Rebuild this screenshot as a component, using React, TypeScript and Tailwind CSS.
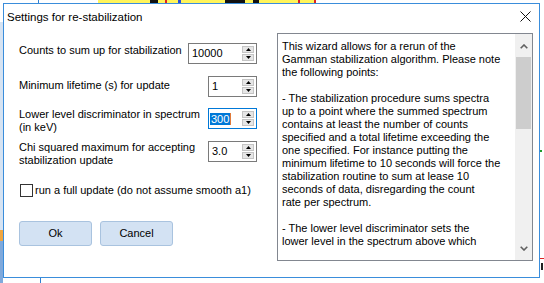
import React from 'react';

const helpLines = [
  'This wizard allows for a rerun of the',
  'Gamman stabilization algorithm. Please note',
  'the following points:',
  '',
  '- The stabilization procedure sums spectra',
  'up to a point where the summed spectrum',
  'contains at least the number of counts',
  'specified and a total lifetime exceeding the',
  'one specified. For instance putting the',
  'minimum lifetime to 10 seconds will force the',
  'stabilization routine to sum at lease 10',
  'seconds of data, disregarding the count',
  'rate per spectrum.',
  '',
  '- The lower level discriminator sets the',
  'lower level in the spectrum above which',
];

const Arrow = ({ up }: { up?: boolean }) => (
  <svg width="5" height="3" viewBox="0 0 5 3">
    <path d={up ? 'M2.5 0 L5 3 L0 3 Z' : 'M0 0 L5 0 L2.5 3 Z'} fill="#000" />
  </svg>
);

const Chevron = ({ up }: { up?: boolean }) => (
  <svg width="8" height="5" viewBox="0 0 8 5">
    <path d={up ? 'M0.7 4.3 L4 1 L7.3 4.3' : 'M0.7 0.7 L4 4 L7.3 0.7'} fill="none" stroke="#606060" strokeWidth="1.6" />
  </svg>
);

interface NumberBoxProps {
  value: string;
  width: string;
  focused?: boolean;
}

const NumberBox: React.FC<NumberBoxProps> = ({ value, width, focused }) => (
  <div
    className={`relative flex h-[21px] shrink-0 items-center border bg-white ${width} ${
      focused ? 'border-[#0078d7] pl-[1px]' : 'border-[#7a7a7a] pl-[3px]'
    }`}
  >
    {focused ? (
      <span className="flex items-center">
        <span className="bg-[#0078d7] px-[1px] leading-[12px] text-white">{value}</span>
        <span className="h-[12px] w-[1px] bg-[#e07a3a]" />
      </span>
    ) : (
      <span>{value}</span>
    )}
    <div className="absolute top-[1px] right-[1px] bottom-[1px] flex w-[13px] flex-col gap-[1px] py-[1px] pr-[1px]">
      <div className="flex flex-1 items-center justify-center border border-[#c4c4c4] bg-[#e6e6e6]">
        <Arrow up />
      </div>
      <div className="flex flex-1 items-center justify-center border border-[#c4c4c4] bg-[#e6e6e6]">
        <Arrow />
      </div>
    </div>
  </div>
);

export default function App() {
  return (
    <div className="relative h-[283px] w-[544px] overflow-hidden bg-white font-['Liberation_Sans',Arial,sans-serif] text-[11px] text-black">
      {/* background application peeking around the dialog */}
      <div className="absolute top-0 left-[38px] h-[3px] w-[1px] bg-[#2f7fd0]" />
      <div className="absolute top-0 left-[98px] h-[3px] w-[218px] bg-[#fff45a]" />
      <div className="absolute top-0 left-[150px] h-[3px] w-[8px] bg-[#111]" />
      <div className="absolute top-0 left-[165px] h-[3px] w-[2px] bg-[#d22]" />
      <div className="absolute top-0 left-[178px] h-[3px] w-[3px] bg-[#2a4cd8]" />
      <div className="absolute top-0 left-[225px] h-[3px] w-[20px] bg-[#111]" />
      <div className="absolute top-0 left-[253px] h-[3px] w-[6px] bg-[#111]" />
      <div className="absolute top-0 left-[298px] h-[3px] w-[2px] bg-[#d22]" />
      <div className="absolute top-0 left-[314px] h-[3px] w-[2px] bg-[#d22]" />
      <div className="absolute top-[22px] left-0 h-[208px] w-[3px] bg-[#d6e3f2]" />
      <div className="absolute top-[230px] left-0 h-[11px] w-[3px] bg-[#f0a640]" />
      <div className="absolute top-[241px] left-0 h-[42px] w-[3px] bg-[#7fa9dc]" />
      <div className="absolute top-[277px] left-[40px] h-[6px] w-[1px] bg-[#2f7fd0]" />
      <div className="absolute top-[150px] left-[540px] h-[2px] w-[2px] bg-[#1a9a2a]" />
      <div className="absolute top-[258px] left-[540px] h-[1px] w-[4px] bg-[#d22]" />
      <div className="absolute top-[263px] left-[541px] h-[7px] w-[2px] bg-[#222]" />

      {/* dialog window */}
      <div className="absolute top-[3px] left-[3px] flex h-[275px] w-[537px] flex-col border border-[#3a8ddb] bg-white">
        <div className="flex h-[27px] shrink-0 items-center justify-between pr-[8px] pl-[3px]">
          <span className="text-[11.5px]">Settings for re-stabilization</span>
          <svg width="11" height="11" viewBox="0 0 11 11" className="mb-[2px]">
            <path d="M0.5 0.5 L10.5 10.5 M10.5 0.5 L0.5 10.5" stroke="#111" strokeWidth="1" />
          </svg>
        </div>

        <div className="flex pr-[5px] pl-[15px]">
          <div className="flex w-[238px] shrink-0 flex-col pt-[12px] leading-[13px]">
            <div className="flex items-start justify-between">
              <span className="pt-[1px]">Counts to sum up for stabilization</span>
              <NumberBox value="10000" width="w-[69px]" />
            </div>
            <div className="mt-[12px] flex items-start justify-between">
              <span className="pt-[3px]">Minimum lifetime (s) for update</span>
              <NumberBox value="1" width="w-[49px]" />
            </div>
            <div className="mt-[11px] flex items-start justify-between">
              <span>
                Lower level discriminator in spectrum
                <br />
                (in keV)
              </span>
              <NumberBox value="300" width="w-[49px]" focused />
            </div>
            <div className="mt-[7px] flex items-start justify-between">
              <span>
                Chi squared maximum for accepting
                <br />
                stabilization update
              </span>
              <NumberBox value="3.0" width="w-[49px]" />
            </div>
            <div className="mt-[17px] flex items-center gap-[2px] pl-[1px]">
              <div className="h-[13px] w-[13px] border border-[#333] bg-white" />
              <span>run a full update (do not assume smooth a1)</span>
            </div>
            <div className="mt-[24px] flex gap-[8px]">
              <button className="flex h-[25px] w-[73px] items-center justify-center rounded-[3px] border border-[#a9c3df] bg-[#d3e2f3]">
                Ok
              </button>
              <button className="flex h-[25px] w-[73px] items-center justify-center rounded-[3px] border border-[#a9c3df] bg-[#d3e2f3]">
                Cancel
              </button>
            </div>
          </div>

          <div className="mt-[2px] ml-[20px] flex h-[228px] w-[256px] border border-[#828790] bg-white">
            <div className="flex-1 pt-[6px] pl-[4px] leading-[13px]">
              {helpLines.map((line, i) => (
                <div key={i} className="h-[13px] whitespace-nowrap">
                  {line}
                </div>
              ))}
            </div>
            <div className="flex w-[17px] shrink-0 flex-col bg-[#f0f0f0]">
              <div className="flex h-[23px] items-center justify-center pt-[1px]">
                <Chevron up />
              </div>
              <div className="mx-[1px] h-[72px] bg-[#cdcdcd]" />
              <div className="flex-1" />
              <div className="flex h-[22px] items-center justify-center pb-[2px]">
                <Chevron />
              </div>
            </div>
          </div>
        </div>
      </div>
    </div>
  );
}
